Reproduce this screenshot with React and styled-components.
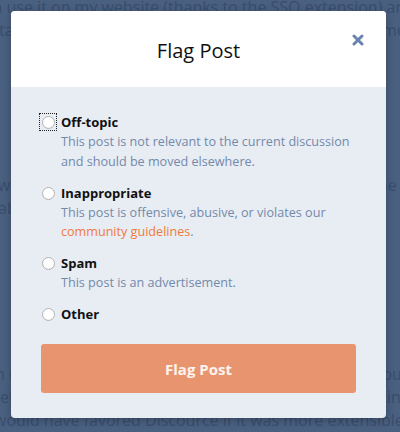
import React from "react";
import styled, { createGlobalStyle } from "styled-components";

const Global = createGlobalStyle`
  html, body { margin: 0; padding: 0; }
  body { width: 400px; height: 432px; overflow: hidden; font-family: "Open Sans", "Liberation Sans", sans-serif; }
`;

const Page = styled.div`
  position: relative;
  width: 400px;
  height: 432px;
  overflow: hidden;
  background: #4a6080;
`;

const Backdrop = styled.div`
  display: flex;
  flex-direction: column;
  color: #394d6d;
  font-size: 16px;
  line-height: 23px;
  margin-top: -4px;
`;

const Para = styled.div`
  display: flex;
  flex-direction: column;
  margin-top: ${(p) => p.$gap || 0}px;
`;

const BgLine = styled.div`
  white-space: nowrap;
  margin-left: ${(p) => p.$shift || 0}px;
`;

const Modal = styled.div`
  position: absolute;
  left: 11px;
  top: 11px;
  width: 375px;
  height: 407px;
  border-radius: 4px;
  overflow: hidden;
  display: flex;
  flex-direction: column;
  background: #e8edf4;
  box-shadow: 0 2px 8px rgba(0, 0, 0, 0.25);
`;

const Header = styled.div`
  position: relative;
  height: 76px;
  background: #ffffff;
  display: flex;
  align-items: center;
  justify-content: center;
`;

const Title = styled.h1`
  margin: 0;
  font-size: 20px;
  font-weight: 400;
  color: #111;
  padding-top: 2px;
`;

const Close = styled.button`
  position: absolute;
  right: 22px;
  top: 23px;
  width: 12px;
  height: 12px;
  padding: 0;
  border: 0;
  background: none;
  display: flex;
`;

const Body = styled.div`
  flex: 1;
  padding: 25px 30px 25px 30px;
  display: flex;
  flex-direction: column;
`;

const Options = styled.div`
  display: flex;
  flex-direction: column;
  gap: 11.5px;
`;

const Option = styled.div`
  display: grid;
  grid-template-columns: 14px 1fr;
  column-gap: 6px;
`;

const RadioWrap = styled.span`
  position: relative;
  width: 13px;
  height: 20px;
  margin-left: 1px;
  display: flex;
  align-items: center;
  justify-content: center;
`;

const Radio = styled.span`
  width: 13px;
  height: 13px;
  box-sizing: border-box;
  border-radius: 50%;
  border: 1px solid #b4b4b4;
  background: radial-gradient(circle at 50% 40%, #ffffff 55%, #ececec 100%);
  margin-top: 1px;
`;

const Focus = styled.span`
  position: absolute;
  left: -3px;
  top: 1px;
  width: 18px;
  height: 18px;
  box-sizing: border-box;
  border: 1px dotted #222;
`;

const Label = styled.div`
  font-size: 13px;
  font-weight: 700;
  color: #111;
  line-height: 20px;
`;

const Desc = styled.div`
  grid-column: 2;
  font-size: 12.6px;
  line-height: 19.5px;
  color: #7389aa;
`;

const Link = styled.span`
  color: #f07a3c;
`;

const Submit = styled.button`
  margin-top: 20px;
  height: 49px;
  border: 0;
  border-radius: 3px;
  background: #e8956f;
  color: #fdf3ee;
  font-family: "Open Sans", "Liberation Sans", sans-serif;
  font-size: 15px;
  font-weight: 700;
  padding: 0;
`;

export default function App() {
  return (
    <Page>
      <Global />
      <Backdrop>
        <Para>
          <BgLine $shift={-24}>can use it on my website (thanks to the SSO extension) and get</BgLine>
          <BgLine $shift={-1}>talk about the community in a single place with the members</BgLine>
        </Para>
        <Para $gap={132}>
          <BgLine $shift={-2}>was a good option but what tipped the scales was the</BgLine>
          <BgLine $shift={-2}>able to keep everything on one site for our users</BgLine>
        </Para>
        <Para $gap={143}>
          <BgLine $shift={-9}>in my opinion this is the best forum software I have found</BgLine>
          <BgLine $shift={-8}>yet and the team behind it is great, though I was looking for</BgLine>
          <BgLine $shift={-6}>would have favored Discource if it was more extensible. The</BgLine>
        </Para>
      </Backdrop>
      <Modal>
        <Header>
          <Title>Flag Post</Title>
          <Close aria-label="close">
            <svg width="12" height="12" viewBox="0 0 12 12">
              <path d="M2 2 L10 10 M10 2 L2 10" stroke="#6884ad" strokeWidth="3" strokeLinecap="round" />
            </svg>
          </Close>
        </Header>
        <Body>
          <Options>
            <Option>
              <RadioWrap>
                <Radio />
                <Focus />
              </RadioWrap>
              <Label>Off-topic</Label>
              <Desc>
                This post is not relevant to the current discussion and should be moved elsewhere.
              </Desc>
            </Option>
            <Option>
              <RadioWrap>
                <Radio />
              </RadioWrap>
              <Label>Inappropriate</Label>
              <Desc>
                This post is offensive, abusive, or violates our <Link>community guidelines</Link>.
              </Desc>
            </Option>
            <Option>
              <RadioWrap>
                <Radio />
              </RadioWrap>
              <Label>Spam</Label>
              <Desc>This post is an advertisement.</Desc>
            </Option>
            <Option>
              <RadioWrap>
                <Radio />
              </RadioWrap>
              <Label>Other</Label>
            </Option>
          </Options>
          <Submit>Flag Post</Submit>
        </Body>
      </Modal>
    </Page>
  );
}
